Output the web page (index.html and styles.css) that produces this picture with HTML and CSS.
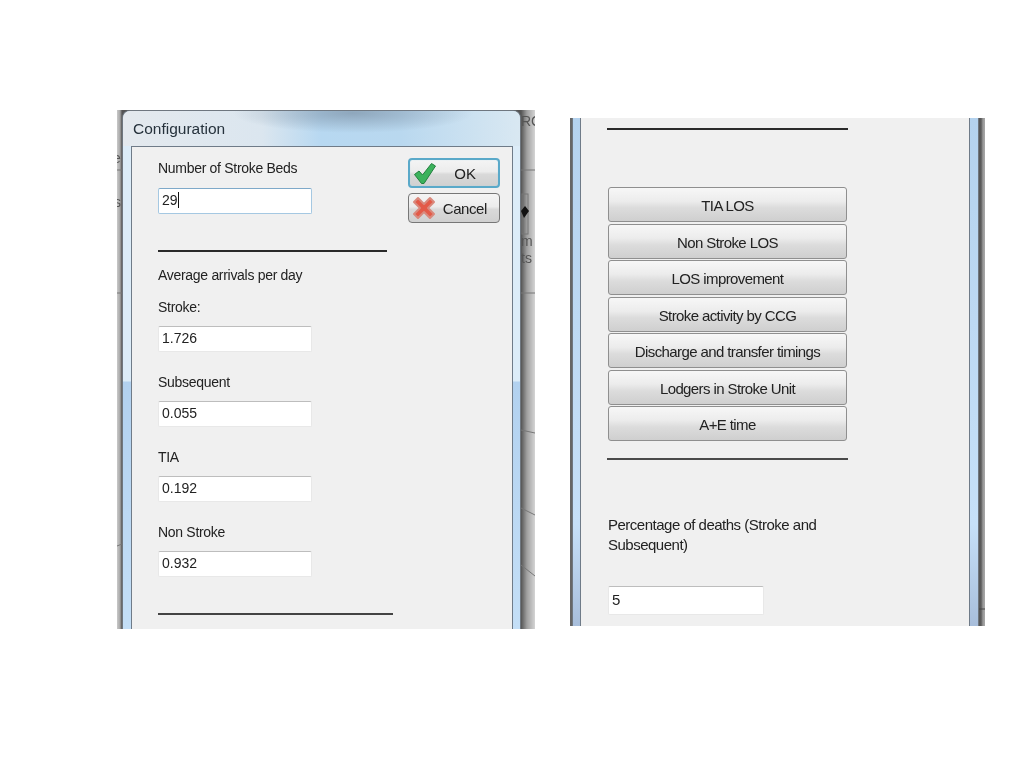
FILE: index.html
```html
<!DOCTYPE html>
<html lang="en">
<head>
  <meta charset="UTF-8" />
  <title>Configuration</title>
  <link rel="stylesheet" href="styles.css">
</head>
<body>

  <div class="slide">

    <!-- left picture: top of the dialog -->
    <div class="shot shot-left">
      <div class="behind">
        <span class="scrap scrap-rc">RC</span>
        <span class="scrap scrap-e">e</span>
        <span class="scrap scrap-s">s</span>
        <span class="scrap scrap-m">m</span>
        <span class="scrap scrap-ts">ts</span>
        <svg class="behind-lines" width="418" height="519" viewBox="0 0 418 519">
          <path d="M404 60H418M404 183H418M0 60H5M0 183H5M404 320L418 323M404 398L418 405M404 455L418 466M0 436L5 434" fill="none" stroke="#777" stroke-width="1" />
          <rect x="405" y="84" width="6" height="40" fill="none" stroke="#777" />
          <path d="M408 96L412 101L407 108L404 101Z" fill="#111" />
        </svg>
      </div>

      <div class="dialog">
        <div class="titlebar">Configuration</div>
        <div class="dialog-body">
          <div class="form">
            <div class="label">Number of Stroke Beds</div>
            <div class="box box-focus"><span class="caret">29</span></div>
            <div class="rule"></div>
            <div class="label heading">Average arrivals per day</div>
            <div class="label">Stroke:</div>
            <div class="box">1.726</div>
            <div class="label">Subsequent</div>
            <div class="box">0.055</div>
            <div class="label">TIA</div>
            <div class="box">0.192</div>
            <div class="label">Non Stroke</div>
            <div class="box">0.932</div>
            <div class="rule rule-long"></div>
          </div>

          <div class="actions">
            <button class="act act-ok">
              <svg width="24" height="23" viewBox="0 0 24 23">
                <path d="M1.5 12.5L6 9L9.5 13L18.5 1.5L22.5 4L11 21.5H8.5Z" fill="#3cb25c" stroke="#23803f" stroke-width="1" stroke-linejoin="round" />
              </svg>
              <span>OK</span>
            </button>
            <button class="act act-cancel">
              <svg width="24" height="24" viewBox="0 0 24 24">
                <path d="M2 6L6 2L12 8L18 2L22 6L16 12L22 18L18 22L12 16L6 22L2 18L8 12Z" fill="#e35a48" stroke="#d9897d" stroke-width="2" stroke-linejoin="round" />
              </svg>
              <span>Cancel</span>
            </button>
          </div>
        </div>
      </div>
    </div>

    <!-- right picture: further down the same dialog -->
    <div class="shot shot-right">
      <div class="behind">
        <svg class="behind-lines" width="415" height="508" viewBox="0 0 415 508">
          <path d="M408 491H415" fill="none" stroke="#444" stroke-width="1" />
        </svg>
      </div>

      <div class="dialog dialog-plain">
        <div class="dialog-body">
          <div class="form-wide">
            <div class="rule"></div>
            <div class="report-list">
              <button class="report">TIA LOS</button>
              <button class="report">Non Stroke LOS</button>
              <button class="report">LOS improvement</button>
              <button class="report">Stroke activity by CCG</button>
              <button class="report">Discharge and transfer timings</button>
              <button class="report">Lodgers in Stroke Unit</button>
              <button class="report">A+E time</button>
            </div>
            <div class="rule rule-low"></div>
            <div class="deaths">Percentage of deaths (Stroke and Subsequent)</div>
            <div class="box box-deaths">5</div>
          </div>
        </div>
      </div>
    </div>

  </div>

</body>
</html>
```

FILE: styles.css
```css
body {
  margin: 0;
  background: #fff;
  font-family: 'Liberation Sans', Arial, sans-serif;
  color: #222;
}

.slide {
  display: flex;
  align-items: flex-start;
  height: 768px;
  padding: 110px 0 0 117px;
  box-sizing: border-box;
}

.shot {
  position: relative;
  overflow: hidden;
  flex: none;
  filter: blur(0.35px);
}

.shot-left {
  width: 418px;
  height: 519px;
  padding-left: 5px;
  box-sizing: border-box;
  background: linear-gradient(90deg, #c9c9c9 0, #a8a8a8 3px, #555 5px, #555 404px, #6e6e6e 406px, #a0a0a0 410px, #d4d4d4 418px);
}

.shot-right {
  width: 415px;
  height: 508px;
  margin: 8px 0 0 35px;
  padding-left: 2px;
  box-sizing: border-box;
  background: linear-gradient(90deg, #666 0, #666 2px, #555 408px, #5a5a5a 411px, #999 413px, #a8a8a8 415px);
}

/* what shows of the window behind the dialog */
.behind {
  position: absolute;
  left: 0;
  top: 0;
  width: 100%;
  height: 100%;
}

.behind-lines {
  position: absolute;
  left: 0;
  top: 0;
}

.scrap {
  position: absolute;
  font-size: 14px;
  line-height: 16px;
  color: #555;
}

.scrap-rc { left: 404px; top: 3px; }
.scrap-e { left: -4px; top: 40px; }
.scrap-s { left: -3px; top: 84px; }
.scrap-m { left: 404px; top: 123px; }
.scrap-ts { left: 404px; top: 140px; }

.dialog {
  position: relative;
  width: 399px;
  height: 100%;
  display: flex;
  flex-direction: column;
  box-sizing: border-box;
  padding: 0 7px 0 8px;
  border: 1px solid #6f7780;
  border-bottom: none;
  border-radius: 8px 8px 0 0;
  background: linear-gradient(180deg, #dcecf8 0, #dcecf8 270px, #b2d1ef 271px, #c4dff7 100%);
}

.dialog-plain {
  width: 407px;
  border-radius: 0;
  border-top: none;
  padding: 0 8px 0 7px;
  background: linear-gradient(180deg, #b4d2ee 0, #c6e0f8 80%, #a8bedb 100%);
}

.titlebar {
  flex: none;
  height: 35px;
  margin: 0 -7px 0 -8px;
  padding: 8px 0 0 10px;
  box-sizing: border-box;
  border-radius: 7px 7px 0 0;
  font-size: 15.5px;
  line-height: 19px;
  color: #26323c;
  background:
    radial-gradient(ellipse 120px 20px at 230px 2px, rgba(120, 140, 160, 0.65), rgba(120, 140, 160, 0)),
    linear-gradient(90deg, #e4e9ee 0, #dbe6ef 35%, #b7d8f1 50%, #b9d8ef 70%, #d9e8f2 100%);
}

.dialog-body {
  flex: 1;
  display: flex;
  background: #f0f0f0;
  border: 1px solid #6f7b88;
  border-bottom: none;
  padding-left: 26px;
}

.dialog-plain .dialog-body {
  border-top: none;
}

.form {
  flex: none;
  width: 250px;
}

.label {
  height: 18px;
  margin: 21px 0 10px;
  font-size: 14px;
  line-height: 18px;
  letter-spacing: -0.3px;
}

.label:first-child {
  margin: 12px 0 11px;
}

.label.heading {
  margin: 14px 0 14px;
}

.heading + .label {
  margin-top: 14px;
}

.box {
  width: 154px;
  height: 26px;
  padding-left: 3px;
  box-sizing: border-box;
  background: #fff;
  border: 1px solid #e8e8e8;
  border-top: 1px solid #bdbdbd;
  border-radius: 2px;
  font-size: 14px;
  line-height: 23px;
}

.box-focus {
  border: 1px solid #a5c8e2;
  border-top-color: #7ea9c9;
}

.caret {
  border-right: 1px solid #111;
}

.rule {
  height: 2px;
  background: #2a2a2a;
  width: 229px;
  margin-top: 36px;
}

.rule-long {
  width: 235px;
  background: #444;
}

.actions {
  flex: none;
  display: flex;
  flex-direction: column;
  gap: 5px;
  width: 92px;
  padding-top: 11px;
}

.act {
  display: flex;
  align-items: center;
  justify-content: space-between;
  width: 92px;
  height: 30px;
  padding: 0 12px 0 3px;
  box-sizing: border-box;
  border: 1px solid #777;
  border-radius: 4px;
  background: linear-gradient(180deg, #f4f4f4 0, #ececec 45%, #d9d9d9 55%, #d0d0d0 100%);
  font-family: inherit;
  font-size: 15px;
  color: #222;
}

.act-ok {
  padding-right: 22px;
  border: 2px solid #5aa9c9;
  box-shadow: inset 0 0 1px #a7d8ea;
}

.act-cancel {
  letter-spacing: -0.4px;
}

.form-wide {
  width: 300px;
}

.form-wide .rule {
  width: 241px;
  margin-top: 10px;
}

.form-wide .rule-low {
  margin-top: 17px;
  background: #4a4a4a;
}

.report-list {
  display: flex;
  flex-direction: column;
  gap: 1.5px;
  width: 239px;
  margin: 57px 0 0 1px;
}

.report {
  height: 35px;
  padding: 2px 0 0;
  border: 1px solid #8f8f8f;
  border-radius: 3px;
  background: linear-gradient(180deg, #f7f7f7 0, #ececec 40%, #dcdcdc 60%, #cfcfcf 100%);
  font-family: inherit;
  font-size: 15px;
  letter-spacing: -0.6px;
  color: #222;
}

.deaths {
  width: 230px;
  margin: 55px 0 0 1px;
  font-size: 15px;
  line-height: 20px;
  letter-spacing: -0.5px;
}

.box-deaths {
  width: 156px;
  height: 29px;
  margin: 31px 0 0 1px;
  padding-left: 3px;
  font-size: 15px;
  line-height: 26px;
}
```
